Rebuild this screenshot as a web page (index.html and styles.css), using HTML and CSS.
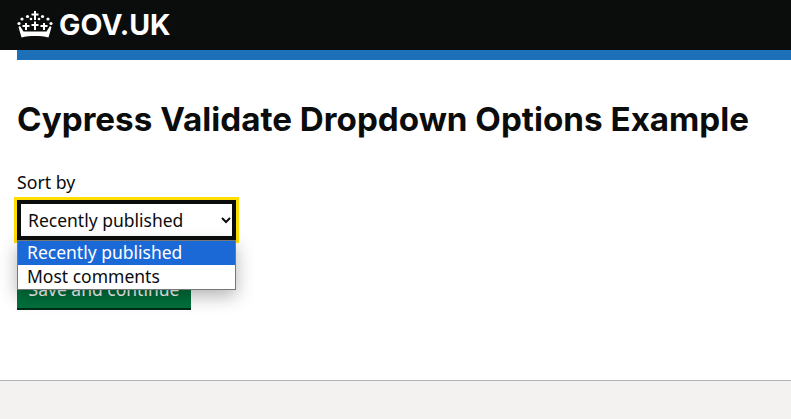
FILE: index.html
```html
<!DOCTYPE html>
<html lang="en">
<head>
<meta charset="utf-8">
<title>Cypress Validate Dropdown Options Example</title>
<link rel="stylesheet" href="styles.css">
</head>
<body>
<header class="header">
  <a class="logo" href="#">
    <svg class="crown" viewBox="0 0 36 28" width="36" height="28" aria-hidden="true">
      <g fill="#fff">
        <path d="M17 0h2v2.500h2.500v2H19V9h-2V4.500h-2.500v-2H17z"/>
        <circle cx="10.500" cy="5.500" r="1.600"/><circle cx="25.500" cy="5.500" r="1.600"/>
        <circle cx="14" cy="8" r="1.300"/><circle cx="22" cy="8" r="1.300"/>
        <circle cx="5" cy="8" r="1.600"/><circle cx="31" cy="8" r="1.600"/>
        <circle cx="2" cy="12.500" r="1.600"/><circle cx="34" cy="12.500" r="1.600"/>
        <path d="M17 10.500h2V13h2.500v2H19v4h-2v-4h-2.500v-2H17zM8 12h2v2h2.500v2H10v3H8v-3H5.500v-2H8zM26 12h2v2h2.500v2H28v3h-2v-3h-2.500v-2H26z"/>
        <path d="M3 15l3.500 5.500h23L33 15l1.500 1-3 10.500c-4-1.200-9-1.500-13.500-1.500s-9.500.3-13.500 1.500L1.500 16z"/>
      </g>
    </svg>
    <span class="logotype">GOV.UK</span>
  </a>
</header>
<div class="rule-wrap"><div class="rule"></div></div>
<main class="main">
  <h1 class="title">Cypress Validate Dropdown Options Example</h1>
  <label class="label" for="sort">Sort by</label>
  <div class="field">
    <select class="select" id="sort">
      <option>Recently published</option>
      <option>Most comments</option>
    </select>
    <div class="popup">
      <div class="option selected">Recently published</div>
      <div class="option">Most comments</div>
    </div>
  </div>
  <button class="button" type="button">Save and continue</button>
</main>
<footer class="footer"></footer>
</body>
</html>
```
FILE: styles.css
```css
* { box-sizing: border-box; }
html, body { margin: 0; padding: 0; }
body {
  height: 419px;
  overflow: hidden;
  display: flex;
  flex-direction: column;
  background: #fff;
  color: #0b0c0c;
  font-family: "Noto Sans", "Liberation Sans", sans-serif;
}
.header {
  height: 50px;
  background: #0b0c0c;
  padding-left: 17px;
  flex: none;
}
.logo {
  display: flex;
  align-items: center;
  gap: 6px;
  height: 50px;
  color: #fff;
  text-decoration: none;
}
.crown { display: block; }
.logotype {
  font-family: "Inter", "Liberation Sans", sans-serif;
  font-size: 28.500px;
  font-weight: 700;
  line-height: 50px;
}
.rule-wrap { padding-left: 17px; flex: none; }
.rule { height: 10px; background: #1d70b8; }
.main {
  flex: 1;
  padding: 37px 17px 0;
}
.title {
  margin: 0 0 28px;
  font-family: "Inter", "Liberation Sans", sans-serif;
  font-size: 33.200px;
  line-height: 45px;
  font-weight: 700;
  white-space: nowrap;
}
.label {
  display: block;
  font-size: 17.700px;
  line-height: 25px;
  margin-bottom: 5px;
}
.field {
  position: relative;
  width: 219px;
  height: 40px;
  margin-bottom: 30px;
}
.select {
  display: block;
  width: 219px;
  height: 40px;
  padding: 5px;
  font-family: inherit;
  font-size: 17.500px;
  color: #0b0c0c;
  background: #fff;
  border: 2px solid #0b0c0c;
  border-radius: 0;
  outline: 3px solid #fd0;
  outline-offset: 0;
  box-shadow: inset 0 0 0 2px #0b0c0c;
}
.popup {
  position: absolute;
  top: 40px;
  left: 0;
  width: 219px;
  background: #fff;
  border: 1px solid #767676;
  box-shadow: 0 6px 18px rgba(0, 0, 0, 0.3);
  z-index: 2;
}
.option {
  height: 24px;
  padding-left: 9px;
  font-size: 17.500px;
  line-height: 22px;
  white-space: nowrap;
}
.selected { background: #1b69d6; color: #fff; }
.button {
  display: block;
  width: 174px;
  height: 38px;
  padding: 0;
  font-family: inherit;
  font-size: 17.500px;
  color: #fff;
  background: #00703c;
  border: 0;
  border-radius: 0;
  box-shadow: 0 2px 0 #002d18;
}
.footer {
  flex: none;
  height: 39px;
  background: #f3f2f1;
  border-top: 1px solid #b1b4b6;
}
```
